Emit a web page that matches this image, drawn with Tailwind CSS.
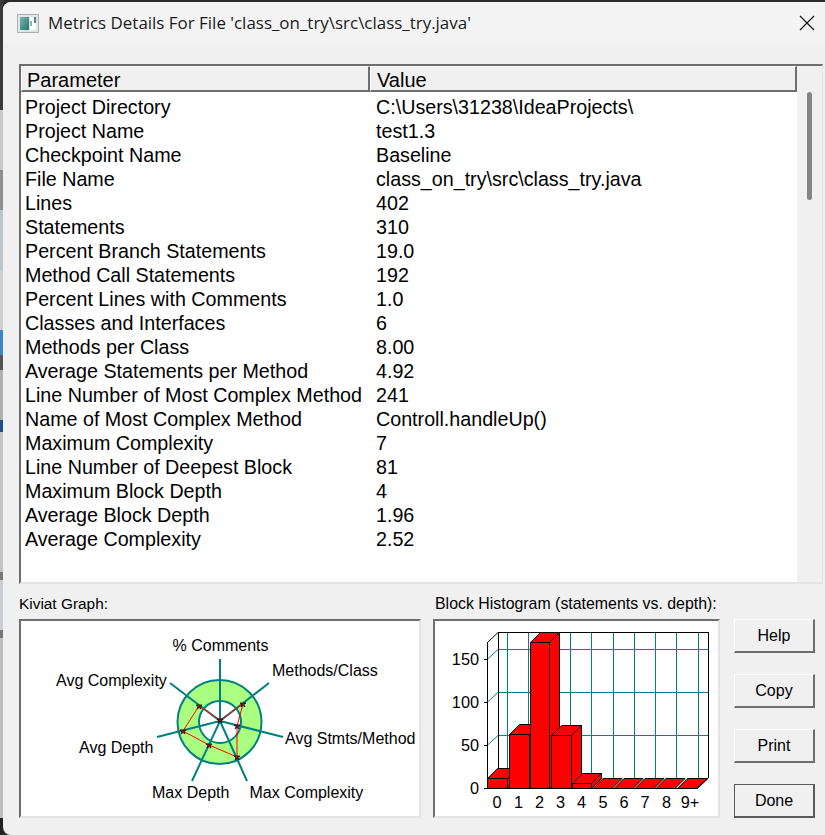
<!DOCTYPE html>
<html lang="en">
<head>
  <meta charset="utf-8" />
  <title>Metrics Details</title>
  <script src="https://cdn.jsdelivr.net/npm/@tailwindcss/browser@4"></script>
</head>
<body class="bg-[#2b2b2b] m-0 p-0 overflow-hidden font-['Liberation_Sans',Arial,sans-serif] text-black">
  <div class="flex w-[825px] h-[835px] overflow-hidden">
    <!-- whatever is behind the dialog -->
    <div class="w-[3px] h-full flex flex-col shrink-0">
      <div class="h-[110px] bg-[#3a3a3a]"></div>
      <div class="h-[60px] bg-[#c9c9c9]"></div>
      <div class="h-[40px] bg-[#8f8f8f]"></div>
      <div class="h-[60px] bg-[#bcc4cc]"></div>
      <div class="h-[60px] bg-[#d0d0d0]"></div>
      <div class="h-[25px] bg-[#3d85c6]"></div>
      <div class="h-[15px] bg-[#555555]"></div>
      <div class="h-[50px] bg-[#b0b0b0]"></div>
      <div class="h-[12px] bg-[#1f4f80]"></div>
      <div class="h-[140px] bg-[#c4c4c4]"></div>
      <div class="h-[8px] bg-[#777777]"></div>
      <div class="h-[50px] bg-[#c8ced4]"></div>
      <div class="h-[8px] bg-[#777777]"></div>
      <div class="h-[180px] bg-[#bdbdbd]"></div>
      <div class="flex-1 bg-[#222222]"></div>
    </div>

    <div class="flex-1 mt-[2px] rounded-tl-[8px] rounded-bl-[8px] bg-[#f0f0f0] flex flex-col overflow-hidden">
      <!-- title bar -->
      <div class="h-[42px] shrink-0 bg-[#f3f3f3] flex items-center pl-[14px] pr-[10px]">
        <svg class="w-[22px] h-[19px] shrink-0" viewBox="0 0 22 19">
          <defs>
            <linearGradient id="ic" x1="0" y1="0" x2="1" y2="1">
              <stop offset="0" stop-color="#7fb2b8" />
              <stop offset="1" stop-color="#1f7a5c" />
            </linearGradient>
          </defs>
          <rect x="0.5" y="0.5" width="21" height="18" fill="#dfe6ea" stroke="#a9b0b4" />
          <rect x="3" y="3" width="9" height="13" fill="url(#ic)" />
          <rect x="13" y="3" width="6" height="13" fill="#ffffff" />
          <rect x="13" y="7" width="2" height="5" fill="#99aabb" />
          <rect x="17" y="3" width="2" height="6" fill="#5b7f8c" />
        </svg>
        <span class="ml-[9px] text-[16.95px] text-[#1a1a1a] font-['Open_Sans',sans-serif] whitespace-pre">Metrics Details For File 'class_on_try\src\class_try.java'</span>
        <svg class="ml-auto w-[16px] h-[16px] shrink-0" viewBox="0 0 16 16">
          <path d="M1 1L15 15M15 1L1 15" stroke="#1a1a1a" stroke-width="1.3" fill="none" />
        </svg>
      </div>

      <!-- metrics table -->
      <div class="mt-[20px] ml-[16px] w-[804px] h-[520px] shrink-0 flex border-t-2 border-l-2 border-t-[#6e6e6e] border-l-[#6e6e6e] border-r border-b-2 border-r-[#e4e4e4] border-b-[#e4e4e4] bg-white">
        <div class="flex-1 flex flex-col">
          <div class="flex h-[26px] bg-[#f0f0f0] text-[20px] leading-[26px] shrink-0">
            <div class="w-[349px] pl-[5px] border-t border-l border-t-white border-l-white border-r-2 border-b-2 border-r-[#6e6e6e] border-b-[#6e6e6e]">Parameter</div>
            <div class="flex-1 pl-[6px] border-t border-l border-t-white border-l-white border-r-2 border-b-2 border-r-[#6e6e6e] border-b-[#6e6e6e]">Value</div>
          </div>
          <div class="pt-[3px] pl-[4px] grid grid-cols-[351px_1fr] auto-rows-[24px] text-[19.7px] leading-[24px] whitespace-nowrap">
            <div>Project Directory</div><div>C:\Users\31238\IdeaProjects\</div>
            <div>Project Name</div><div>test1.3</div>
            <div>Checkpoint Name</div><div>Baseline</div>
            <div>File Name</div><div>class_on_try\src\class_try.java</div>
            <div>Lines</div><div>402</div>
            <div>Statements</div><div>310</div>
            <div>Percent Branch Statements</div><div>19.0</div>
            <div>Method Call Statements</div><div>192</div>
            <div>Percent Lines with Comments</div><div>1.0</div>
            <div>Classes and Interfaces</div><div>6</div>
            <div>Methods per Class</div><div>8.00</div>
            <div>Average Statements per Method</div><div>4.92</div>
            <div>Line Number of Most Complex Method</div><div>241</div>
            <div>Name of Most Complex Method</div><div>Controll.handleUp()</div>
            <div>Maximum Complexity</div><div>7</div>
            <div>Line Number of Deepest Block</div><div>81</div>
            <div>Maximum Block Depth</div><div>4</div>
            <div>Average Block Depth</div><div>1.96</div>
            <div>Average Complexity</div><div>2.52</div>
          </div>
        </div>
        <!-- scrollbar -->
        <div class="w-[25px] shrink-0 bg-[#f0f0f0] pt-[26px] pl-[10px]">
          <div class="w-[5px] h-[108px] rounded-full bg-[#858585]"></div>
        </div>
      </div>

      <!-- graphs and buttons -->
      <div class="flex ml-[16px]">
        <div class="w-[402px] shrink-0">
          <div class="h-[35px] pt-[5px] flex items-center text-[15.4px]">Kiviat Graph:</div>
          <div class="h-[199px] border-t-2 border-l-2 border-t-[#6e6e6e] border-l-[#6e6e6e] border-r-2 border-b-2 border-r-[#e4e4e4] border-b-[#e4e4e4] bg-white">
            <svg class="block w-[398px] h-[195px]" viewBox="21 621 398 195" shape-rendering="crispEdges">
              <defs>
                <path id="star" d="M-3 -1H3L1 0.5L2 3L0 1.5L-2 3L-1 0.5Z" fill="#e00000" stroke="#000000" stroke-width="0.7" />
              </defs>
              <circle cx="219.5" cy="722" r="42" fill="#aaff80" stroke="#008080" stroke-width="2" shape-rendering="auto" />
              <circle cx="220" cy="722" r="21" fill="#ffffff" stroke="#008080" stroke-width="2" shape-rendering="auto" />
              <g stroke="#008080" stroke-width="2" fill="none" shape-rendering="auto">
                <path d="M220 721L220 659" />
                <path d="M220 721L269 683" />
                <path d="M220 721L283 737" />
                <path d="M220 721L247 781" />
                <path d="M220 721L192 781" />
                <path d="M220 721L157 737" />
                <path d="M220 721L170 683" />
              </g>
              <polygon points="220,720 243,704 237,726 237,757 209,745 183,731 199,706" fill="none" stroke="#ff0000" stroke-width="1" shape-rendering="auto" />
              <g shape-rendering="auto">
                <use href="#star" x="220" y="720" />
                <use href="#star" x="243" y="704" />
                <use href="#star" x="237" y="726" />
                <use href="#star" x="237" y="757" />
                <use href="#star" x="209" y="745" />
                <use href="#star" x="183" y="731" />
                <use href="#star" x="199" y="706" />
              </g>
              <g font-size="16" fill="#000000" shape-rendering="auto">
                <text x="172.5" y="651">% Comments</text>
                <text x="272" y="676">Methods/Class</text>
                <text x="56" y="686">Avg Complexity</text>
                <text x="285" y="744">Avg Stmts/Method</text>
                <text x="79" y="753">Avg Depth</text>
                <text x="152" y="798">Max Depth</text>
                <text x="249.5" y="798">Max Complexity</text>
              </g>
            </svg>
          </div>
        </div>

        <div class="w-[287px] shrink-0 ml-[12px]">
          <div class="h-[35px] pt-[5px] flex items-center pl-[2px] whitespace-nowrap text-[15.9px]">Block Histogram (statements vs. depth):</div>
          <div class="h-[199px] border-t-2 border-l-2 border-t-[#6e6e6e] border-l-[#6e6e6e] border-r-2 border-b-2 border-r-[#e4e4e4] border-b-[#e4e4e4] bg-white">
            <svg class="block w-[283px] h-[195px]" viewBox="435 621 283 195" shape-rendering="crispEdges">
              <!-- teal grid on the back wall -->
              <g stroke="#008080" stroke-width="1" fill="none">
                <path d="M498 649H708M498 692H708M498 735H708" />
                <path d="M507 632V778M528 632V778M549 632V778M570 632V778M591 632V778M613 632V778M634 632V778M655 632V778M676 632V778M698 632V778" />
              </g>
              <g stroke="#008080" stroke-width="1" fill="none" shape-rendering="auto">
                <path d="M487 659.5L498 649.5M487 702.5L498 692.5M487 745.5L498 735.5" />
              </g>
              <!-- axes -->
              <g stroke="#000000" stroke-width="1" fill="none">
                <path d="M498 632H708V778" />
                <path d="M498 632V778" />
                <path d="M487 642V788H698" />
                <path d="M484 659H487M484 702H487M484 745H487M484 788H487" />
              </g>
              <g stroke="#000000" stroke-width="1" fill="none" shape-rendering="auto">
                <path d="M487.5 642.5L498 632.5M698 788L708.5 778" />
              </g>
              <!-- bars -->
              <g fill="#ff0000" stroke="#000000" stroke-width="1" shape-rendering="auto">
                <polygon points="593,788.5 612,788.5 622,778.5 603,778.5" />
                <polygon points="614,788.5 633,788.5 643,778.5 624,778.5" />
                <polygon points="635,788.5 654,788.5 664,778.5 645,778.5" />
                <polygon points="656,788.5 675,788.5 685,778.5 666,778.5" />
                <polygon points="677.5,788.5 696.5,788.5 707.5,778.5 687.5,778.5" />

                <polygon points="487.5,778.5 497.5,768.5 517.5,768.5 507.5,778.5" />
                <polygon points="507.5,778.5 517.5,768.5 517.5,778.5 507.5,788.5" />
                <rect x="487.5" y="778.5" width="20" height="10" />

                <polygon points="509.5,734.5 519.5,724.5 539.5,724.5 529.5,734.5" />
                <polygon points="529.5,734.5 539.5,724.5 539.5,778.5 529.5,788.5" />
                <rect x="509.5" y="734.5" width="20" height="54" />

                <polygon points="530.5,642.5 540.5,632.5 559.5,632.5 549.5,642.5" />
                <polygon points="549.5,642.5 559.5,632.5 559.5,778.5 549.5,788.5" />
                <rect x="530.5" y="642.5" width="19" height="146" />

                <polygon points="551.5,735.5 561.5,725.5 581.5,725.5 571.5,735.5" />
                <polygon points="571.5,735.5 581.5,725.5 581.5,778.5 571.5,788.5" />
                <rect x="551.5" y="735.5" width="20" height="53" />

                <polygon points="572.5,783.5 582.5,773.5 601.5,773.5 591.5,783.5" />
                <polygon points="591.5,783.5 601.5,773.5 601.5,778.5 591.5,788.5" />
                <rect x="572.5" y="783.5" width="19" height="5" />
              </g>
              <g font-size="16.3" fill="#000000" shape-rendering="auto">
                <g text-anchor="end">
                  <text x="479" y="665">150</text>
                  <text x="479" y="708">100</text>
                  <text x="479" y="751">50</text>
                  <text x="479" y="794">0</text>
                </g>
                <g text-anchor="middle">
                  <text x="497" y="808">0</text>
                  <text x="518.5" y="808">1</text>
                  <text x="539.5" y="808">2</text>
                  <text x="560.5" y="808">3</text>
                  <text x="581.5" y="808">4</text>
                  <text x="603" y="808">5</text>
                  <text x="624" y="808">6</text>
                  <text x="645" y="808">7</text>
                  <text x="666.5" y="808">8</text>
                  <text x="690" y="808">9+</text>
                </g>
              </g>
            </svg>
          </div>
        </div>

        <div class="w-[81px] shrink-0 ml-[14px] pt-[35px] flex flex-col gap-[21px] text-[16px]">
          <button class="h-[34px] pt-[1px] bg-[#f0f0f0] border-t border-l border-t-white border-l-white border-r-2 border-b-2 border-r-[#6e6e6e] border-b-[#6e6e6e]">Help</button>
          <button class="h-[34px] pt-[1px] bg-[#f0f0f0] border-t border-l border-t-white border-l-white border-r-2 border-b-2 border-r-[#6e6e6e] border-b-[#6e6e6e]">Copy</button>
          <button class="h-[34px] pt-[1px] bg-[#f0f0f0] border-t border-l border-t-white border-l-white border-r-2 border-b-2 border-r-[#6e6e6e] border-b-[#6e6e6e]">Print</button>
          <button class="h-[34px] pt-[1px] bg-[#f0f0f0] border border-[#5a5a5a] border-r-2 border-b-2">Done</button>
        </div>
      </div>
    </div>
  </div>
</body>
</html>
